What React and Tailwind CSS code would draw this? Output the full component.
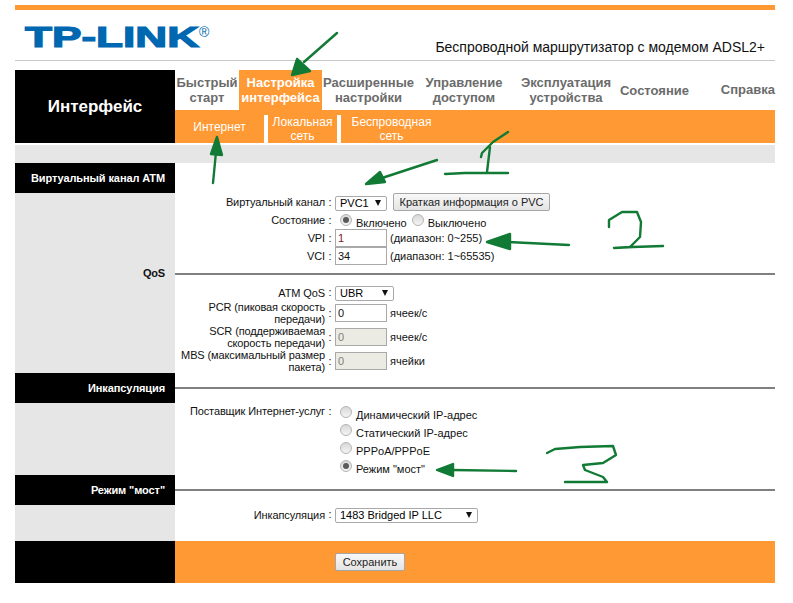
// Router admin page: ATM virtual channel settings with hand-drawn green notes on top.
import React from "react";

const font = { fontFamily: '"Liberation Sans", Arial, sans-serif' };

const Row = ({ label, children, className = "" }) => (
  <div className={`flex items-center ${className}`}>
    <div className="w-[150px] shrink-0 text-right leading-[12px] tracking-[-0.12px]">{label}</div>
    <div className="w-[10px] shrink-0 text-center">:</div>
    <div className="flex items-center gap-[6px]">{children}</div>
  </div>
);

const Field = ({ value, disabled, red }) => (
  <input
    readOnly
    value={value}
    disabled={disabled}
    className={`w-[52px] h-[18px] border border-[#a9a9a9] pl-[2px] text-[11px] outline-none ${
      disabled ? "bg-[#ebebe4] text-[#7f7f7f]" : "bg-white"
    } ${red ? "text-[#7a1a1a]" : ""}`}
  />
);

const Select = ({ value, className }) => (
  <div className={`relative h-[15px] ${className}`}>
    <select
      defaultValue={value}
      className="appearance-none w-full h-full bg-white border border-[#a9a9a9] rounded-[2px] pl-[4px] text-[11px] leading-[13px] text-black outline-none"
    >
      <option>{value}</option>
    </select>
    <svg className="absolute right-[6px] top-[5px] w-[6px] h-[6px]" viewBox="0 0 7 7">
      <path d="M0 0h7L3.5 7z" fill="#111" />
    </svg>
  </div>
);

const Radio = ({ on }) => (
  <span className="flex items-center justify-center w-[12px] h-[12px] rounded-full border border-[#b4b4b4] bg-gradient-to-b from-[#d8d8d8] to-[#f4f4f4] shrink-0">
    {on && <span className="w-[6px] h-[6px] rounded-full bg-[#5a5a5a]" />}
  </span>
);

const GrayButton = ({ children, className }) => (
  <button className={`h-[18px] border border-[#a6a6a6] rounded-[2px] bg-gradient-to-b from-[#f8f8f8] to-[#e4e4e4] text-[11px] leading-none text-[#222] ${className}`}>
    {children}
  </button>
);

const Tab = ({ width, active, children }) => (
  <div
    className={`flex items-center justify-center text-center h-[40px] leading-[15px] text-[13px] font-bold whitespace-pre-line ${width} ${
      active ? "bg-[#ff9933] text-white" : "text-[#6b6b6b]"
    }`}
  >
    {children}
  </div>
);

const SectionHead = ({ title, lined = true }) => (
  <div className="flex h-[30px]">
    <div className="w-[160px] bg-black text-white font-bold text-[11px] flex items-center justify-end pr-[10px] tracking-[-0.1px]">
      {title}
    </div>
    <div className="flex-1 flex items-center">
      {lined && <div className="w-full h-[2px] bg-[#808080]" />}
    </div>
  </div>
);

// Green marker notes drawn on the screenshot
const Notes = () => (
  <svg className="absolute left-0 top-0 pointer-events-none" width="793" height="603" viewBox="0 0 793 603" fill="none" stroke="#117a35" strokeWidth="2.4" strokeLinecap="round" strokeLinejoin="round">
    <path d="M337 33L304 62" />
    <path d="M292 75L297 59L310 71Z" fill="#117a35" />
    <path d="M213 183L216 152" />
    <path d="M217 137L211 154L222 155Z" fill="#117a35" />
    <path d="M437 160L382 178" />
    <path d="M366 184L380 172L385 182Z" fill="#117a35" />
    <path d="M569 245L508 242" />
    <path d="M487 242L510 234L510 249Z" fill="#117a35" />
    <path d="M516 471L452 470" />
    <path d="M437 470L453 464L453 476Z" fill="#117a35" />
    <path d="M508 132L493 142L482 153L481 157M490 147L487 172M445 174L465 173L508 173" />
    <path d="M547 453L555 449L580 447L613 446L616 455L603 463L583 465L585 470L603 477L607 482L565 482" />
    <path d="M609 227L609 220L622 212L637 212L641 222L640 237L630 247L614 248L633 247L663 246" />
  </svg>
);

export default function App() {
  return (
    <div className="relative w-[793px] h-[603px] bg-white overflow-hidden text-[11px] text-[#111]" style={font}>
      <div className="ml-[15px] w-[760px] pt-[5px]">
        <div className="h-[5px] bg-[#ff9933]" />

        {/* Logo + model line */}
        <div className="h-[51px] flex items-end justify-between border-b border-[#c8c8c8]">
          <svg width="200" height="40" viewBox="0 0 200 40" className="mb-[5px] ml-[9px]">
            <text x="1" y="32" fontSize="29" fontWeight="700" fill="#0067b1" stroke="#0067b1" strokeWidth="1.2" textLength="174" lengthAdjust="spacingAndGlyphs" fontFamily="Liberation Sans">
              TP-LINK
            </text>
            <text x="175" y="22" fontSize="14" fill="#0067b1" fontFamily="Liberation Sans">®</text>
          </svg>
          <div className="text-[14px] leading-[15px] mb-[5px] mr-[10px] text-[#111]">
            Беспроводной маршрутизатор с модемом ADSL2+
          </div>
        </div>

        {/* Top navigation */}
        <div className="flex mt-[9px]">
          <div className="w-[160px] h-[73px] bg-black text-white font-bold text-[17px] flex items-center justify-center">
            Интерфейс
          </div>
          <div className="flex-1">
            <div className="flex h-[40px]">
              <Tab width="w-[64px]">{"Быстрый\nстарт"}</Tab>
              <Tab width="w-[83px]" active>{"Настройка\nинтерфейса"}</Tab>
              <Tab width="w-[93px]">{"Расширенные\nнастройки"}</Tab>
              <Tab width="w-[98px]">{"Управление\nдоступом"}</Tab>
              <Tab width="w-[106px]">{"Эксплуатация\nустройства"}</Tab>
              <Tab width="w-[71px]">Состояние</Tab>
              <div className="flex-1 flex items-center justify-end text-[13px] font-bold text-[#6b6b6b]">Справка</div>
            </div>
            <div className="flex items-end h-[33px] bg-[#ff9933] text-white text-[12px] leading-[14px] text-center">
              <div className="w-[89px] h-[33px] flex items-center justify-center">Интернет</div>
              <div className="w-[4px] h-[28px] bg-white" />
              <div className="w-[69px] h-[28px]">Локальная<br />сеть</div>
              <div className="w-[4px] h-[28px] bg-white" />
              <div className="w-[101px] h-[28px]">Беспроводная<br />сеть</div>
            </div>
          </div>
        </div>

        <div className="h-[18px] mt-[2px] bg-[#e6e6e6]" />

        {/* Virtual channel */}
        <SectionHead title="Виртуальный канал ATM" lined={false} />
        <div className="flex">
          <div className="w-[160px] h-[180px] bg-[#e6e6e6] flex flex-col items-end pt-[72px] pr-[10px] font-bold tracking-[-0.2px]">QoS</div>
          <div className="flex-1">
            <Row label="Виртуальный канал" className="h-[18px]">
              <Select value="PVC1" className="w-[52px]" />
              <GrayButton className="w-[157px]">Краткая информация о PVC</GrayButton>
            </Row>
            <Row label="Состояние" className="h-[18px]">
              <span className="flex items-center gap-[4px] pl-[5px]"><Radio on /><span className="mt-[6px]">Включено</span></span>
              <span className="flex items-center gap-[4px] -ml-[1px]"><Radio /><span className="mt-[6px]">Выключено</span></span>
            </Row>
            <Row label="VPI" className="h-[18px]"><Field value="1" red /><span className="-ml-[3px]">(диапазон: 0~255)</span></Row>
            <Row label="VCI" className="h-[18px]"><Field value="34" /><span className="-ml-[3px]">(диапазон: 1~65535)</span></Row>
            <div className="h-[2px] bg-[#808080] mt-[8px]" />
            <Row label="ATM QoS" className="h-[15px] mt-[10px]"><Select value="UBR" className="w-[59px]" /></Row>
            <Row label={<>PCR (пиковая скорость<br />передачи)</>} className="h-[24px] mt-[1px]"><Field value="0" /><span className="-ml-[3px]">ячеек/с</span></Row>
            <Row label={<>SCR (поддерживаемая<br />скорость передачи)</>} className="h-[24px]"><Field value="0" disabled /><span className="-ml-[3px]">ячеек/с</span></Row>
            <Row label={<>MBS (максимальный размер<br />пакета)</>} className="h-[24px]"><Field value="0" disabled /><span className="-ml-[3px]">ячейки</span></Row>
          </div>
        </div>

        {/* Encapsulation */}
        <SectionHead title="Инкапсуляция" />
        <div className="flex h-[72px]">
          <div className="w-[160px] bg-[#e6e6e6]" />
          <div className="flex-1 flex">
            <div className="w-[150px] text-right whitespace-nowrap pt-[2px] leading-[13px] tracking-[-0.12px]">Поставщик Интернет-услуг</div>
            <div className="w-[10px] text-center pt-[2px] leading-[13px]">:</div>
            <div className="flex flex-col pl-[5px]">
              {["Динамический IP-адрес", "Статический IP-адрес", "PPPoA/PPPoE", 'Режим "мост"'].map((t, i) => (
                <div key={t} className="h-[18px] flex items-center gap-[4px]">
                  <Radio on={i === 3} />
                  <span className="mt-[6px]">{t}</span>
                </div>
              ))}
            </div>
          </div>
        </div>

        {/* Bridge mode */}
        <SectionHead title='Режим "мост"' />
        <div className="flex h-[36px]">
          <div className="w-[160px] bg-[#e6e6e6]" />
          <div className="flex-1 pt-[1px]">
            <Row label="Инкапсуляция" className="h-[17px]"><Select value="1483 Bridged IP LLC" className="w-[143px]" /></Row>
          </div>
        </div>

        {/* Footer */}
        <div className="flex h-[42px]">
          <div className="w-[160px] bg-black" />
          <div className="flex-1 bg-[#ff9933] pl-[160px] pt-[12px]">
            <GrayButton className="block w-[70px]">Сохранить</GrayButton>
          </div>
        </div>
      </div>
      <Notes />
    </div>
  );
}
